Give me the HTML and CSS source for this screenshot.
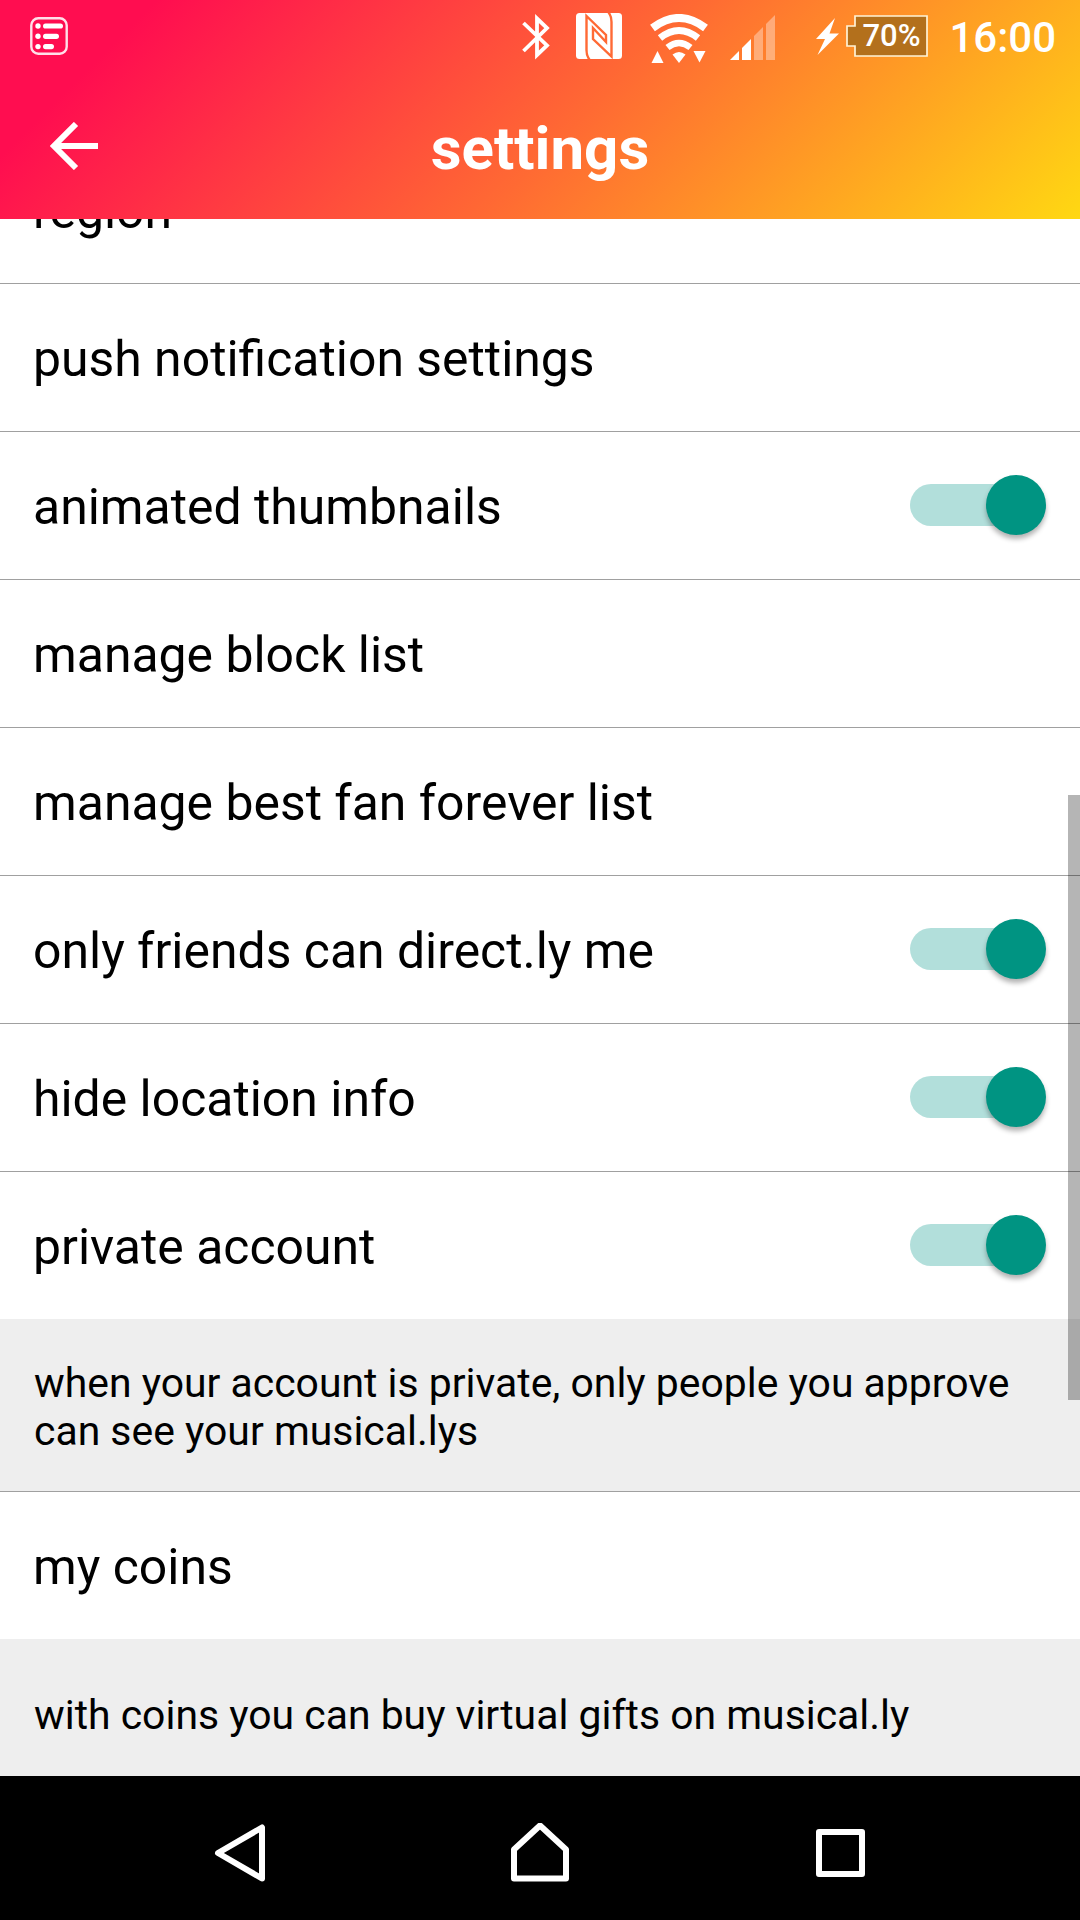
FILE: index.html
```html
<!DOCTYPE html>
<html lang="en">
<head>
    <meta charset="utf-8">
    <meta name="viewport" content="width=device-width, initial-scale=1.0">
    <title>settings</title>
    <link rel="stylesheet" href="styles.css">
</head>
<body>
    <header class="header">
        <div class="status-bar">
            <svg class="icon-list" width="38" height="38" viewBox="0 0 38 38">
                <rect x="1.3" y="1.3" width="35.4" height="35.4" rx="7" fill="none" stroke="#ffdfe8" stroke-width="2.4"/>
                <g fill="#fff">
                    <circle cx="8" cy="9" r="2.7"/>
                    <circle cx="8" cy="19.3" r="2.7"/>
                    <circle cx="8" cy="29.6" r="2.7"/>
                    <rect x="13" y="6.4" width="20" height="5.2" rx="2.6"/>
                    <rect x="13" y="16.7" width="16" height="5.2" rx="2.6"/>
                    <rect x="13" y="27" width="11" height="5.2" rx="2.6"/>
                </g>
            </svg>
            <svg class="icon-bluetooth" width="30" height="46" viewBox="0 0 30 46">
                <path d="M2.5 9 L26 31.5 L16 41 V4.5 L26 14 L2.5 37" fill="none" stroke="#fff" stroke-width="3.8"/>
            </svg>
            <svg class="icon-nfc" width="46" height="46" viewBox="0 0 46 46">
                <rect width="46" height="46" rx="3.5" fill="#fff"/>
                <path d="M13.5 46.5 Q10.5 43 10.5 37 V3 L30 22 V29 L17 15 V26 L35.5 43.500 V9 Q35.5 3 32.5 -0.5" fill="none" stroke="#ff6a35" stroke-width="2.4"/>
            </svg>
            <svg class="icon-wifi" width="60" height="50" viewBox="0 0 60 50">
                <g fill="none" stroke="#fff">
                    <path d="M3.5 14 Q30 -6 56.5 14" stroke-width="8"/>
                    <path d="M11 24 Q30 9 49 24" stroke-width="7"/>
                    <path d="M18.5 33.5 Q30 24.5 41.5 33.5" stroke-width="6.5"/>
                </g>
                <g fill="#fff">
                    <path d="M23.5 40.5 Q30 35.5 36.5 40.5 L30 49 Z"/>
                    <path d="M2.5 49 L8.5 37 L14.5 49 Z"/>
                    <path d="M44.5 37 H56.5 L50.5 48.5 Z"/>
                </g>
            </svg>
            <svg class="icon-signal" width="46" height="46" viewBox="0 0 46 46">
                <g fill="#fff">
                    <path d="M0 45 L9 36 V45 Z"/>
                    <path d="M12 33 L21 24 V45 H12 Z"/>
                    <path d="M24 21 L33 12 V45 H24 Z" opacity=".36"/>
                    <path d="M36 9 L45 0 V45 H36 Z" opacity=".36"/>
                </g>
            </svg>
            <svg class="icon-bolt" width="24" height="38" viewBox="0 0 24 38">
                <path d="M19 0 L0 21 H9 L1.5 37 L23 15.5 H13.5 Z" fill="#fff"/>
            </svg>
            <div class="battery">
                <svg width="82" height="42" viewBox="0 0 82 42">
                    <path d="M9 1 H81 V41 H9 V31 H1 V11 H9 Z" fill="#b3701c" stroke="#fff3d6" stroke-width="1.7"/>
                </svg>
                <span class="battery-text">70%</span>
            </div>
            <span class="clock">16:00</span>
        </div>
        <div class="title-bar">
            <svg class="back" width="48" height="48" viewBox="0 0 48 48">
                <path d="M26 2 L4 24 L26 46 M4 24 H48" fill="none" stroke="#fff" stroke-width="6"/>
            </svg>
            <h1>settings</h1>
        </div>
    </header>

    <main class="list">
        <div class="row">region</div>
        <div class="row">push notification settings</div>
        <div class="row">animated thumbnails <span class="switch"></span></div>
        <div class="row">manage block list</div>
        <div class="row">manage best fan forever list</div>
        <div class="row">only friends can direct.ly me <span class="switch"></span></div>
        <div class="row">hide location info <span class="switch"></span></div>
        <div class="row last">private account <span class="switch"></span></div>
        <p class="note">when your account is private, only people you approve can see your musical.lys</p>
        <div class="row last">my coins</div>
        <p class="note short">with coins you can buy virtual gifts on musical.ly</p>
        <div class="scrollbar"></div>
    </main>

    <nav class="nav-bar">
        <svg width="60" height="60" viewBox="0 0 60 60">
            <path d="M8 30 L52 4.5 V55.5 Z"/>
        </svg>
        <svg width="60" height="60" viewBox="0 0 60 60">
            <path d="M30 2.5 L56 26.5 V55.5 H4 V26.5 Z"/>
        </svg>
        <svg width="60" height="60" viewBox="0 0 60 60">
            <rect x="9" y="9" width="43" height="42"/>
        </svg>
    </nav>
</body>
</html>
```
FILE: styles.css
```css
* {
    box-sizing: border-box;
}

body {
    font-family: Roboto, sans-serif;
    margin: 0;
    width: 1080px;
    height: 1920px;
    display: flex;
    flex-direction: column;
    overflow: hidden;
    background: #fff;
    color: #000;
}

svg {
    display: block;
    flex: none;
}

/* Header */
.header {
    height: 219px;
    flex: none;
    background: linear-gradient(135deg, #ff0d50 12%, #ff6a33 54%, #ffd812 100%);
    color: #fff;
}

.status-bar {
    height: 73px;
    display: flex;
    align-items: center;
    padding: 0 24px 0 30px;
}

.icon-list {
    margin-top: -2px;
}

.icon-bluetooth {
    margin-left: auto;
}

.icon-nfc {
    margin: -2px 0 0 25px;
}

.icon-wifi {
    margin: 4px 0 0 27px;
}

.icon-signal {
    margin: 2px 0 0 21px;
}

.icon-bolt {
    margin-left: 40px;
}

.battery {
    position: relative;
    margin: -1px 0 0 6px;
}

.battery-text {
    position: absolute;
    left: 8px;
    right: 0;
    top: 0;
    line-height: 41px;
    font-size: 31px;
    font-weight: 500;
    text-align: center;
}

.clock {
    margin: 2px 0 0 21px;
    font-size: 42px;
    font-weight: 500;
}

.title-bar {
    height: 146px;
    display: grid;
    grid-template-columns: 150px 1fr 150px;
}

.back {
    margin: 49px 0 0 50px;
}

h1 {
    margin: 0;
    padding-top: 42px;
    font-size: 60px;
    line-height: 68px;
    font-weight: bold;
    text-align: center;
}

/* The list is scrolled, its top row is cut off by the header */
.list {
    position: relative;
    flex: 1;
    min-height: 0;
    display: flex;
    flex-direction: column;
    justify-content: flex-end;
    overflow: hidden;
}

.row {
    height: 148px;
    flex: none;
    display: flex;
    align-items: center;
    justify-content: space-between;
    padding: 3px 34px 0 33px;
    border-bottom: 1px solid #a0a0a0;
    font-size: 49.9px;
}

.row.last {
    height: 147px;
    border-bottom: none;
}

.switch {
    position: relative;
    width: 136px;
    height: 42px;
    margin-top: -5px;
    border-radius: 21px;
    background: linear-gradient(90deg, #b2dfdb 110px, transparent 110px);
}

.switch::after {
    content: "";
    position: absolute;
    right: 0;
    top: -9px;
    width: 60px;
    height: 60px;
    border-radius: 50%;
    background: #009482;
    box-shadow: 0 4px 5px rgba(0, 0, 0, 0.3);
}

.note {
    flex: none;
    height: 173px;
    margin: 0;
    padding: 40px 60px 0 34px;
    border-bottom: 1px solid #a0a0a0;
    background: #eee;
    font-size: 40.9px;
    line-height: 48px;
}

.note.short {
    height: 137px;
    padding-top: 52px;
    border-bottom: none;
}

.scrollbar {
    position: absolute;
    right: 0;
    top: 576px;
    width: 12px;
    height: 605px;
    background: rgba(0, 0, 0, 0.29);
}

/* Navigation */
.nav-bar {
    height: 144px;
    flex: none;
    display: flex;
    justify-content: center;
    gap: 240px;
    padding-top: 47px;
    background: #000;
}

.nav-bar svg {
    fill: none;
    stroke: #fff;
    stroke-width: 6px;
    stroke-linejoin: round;
}
```
